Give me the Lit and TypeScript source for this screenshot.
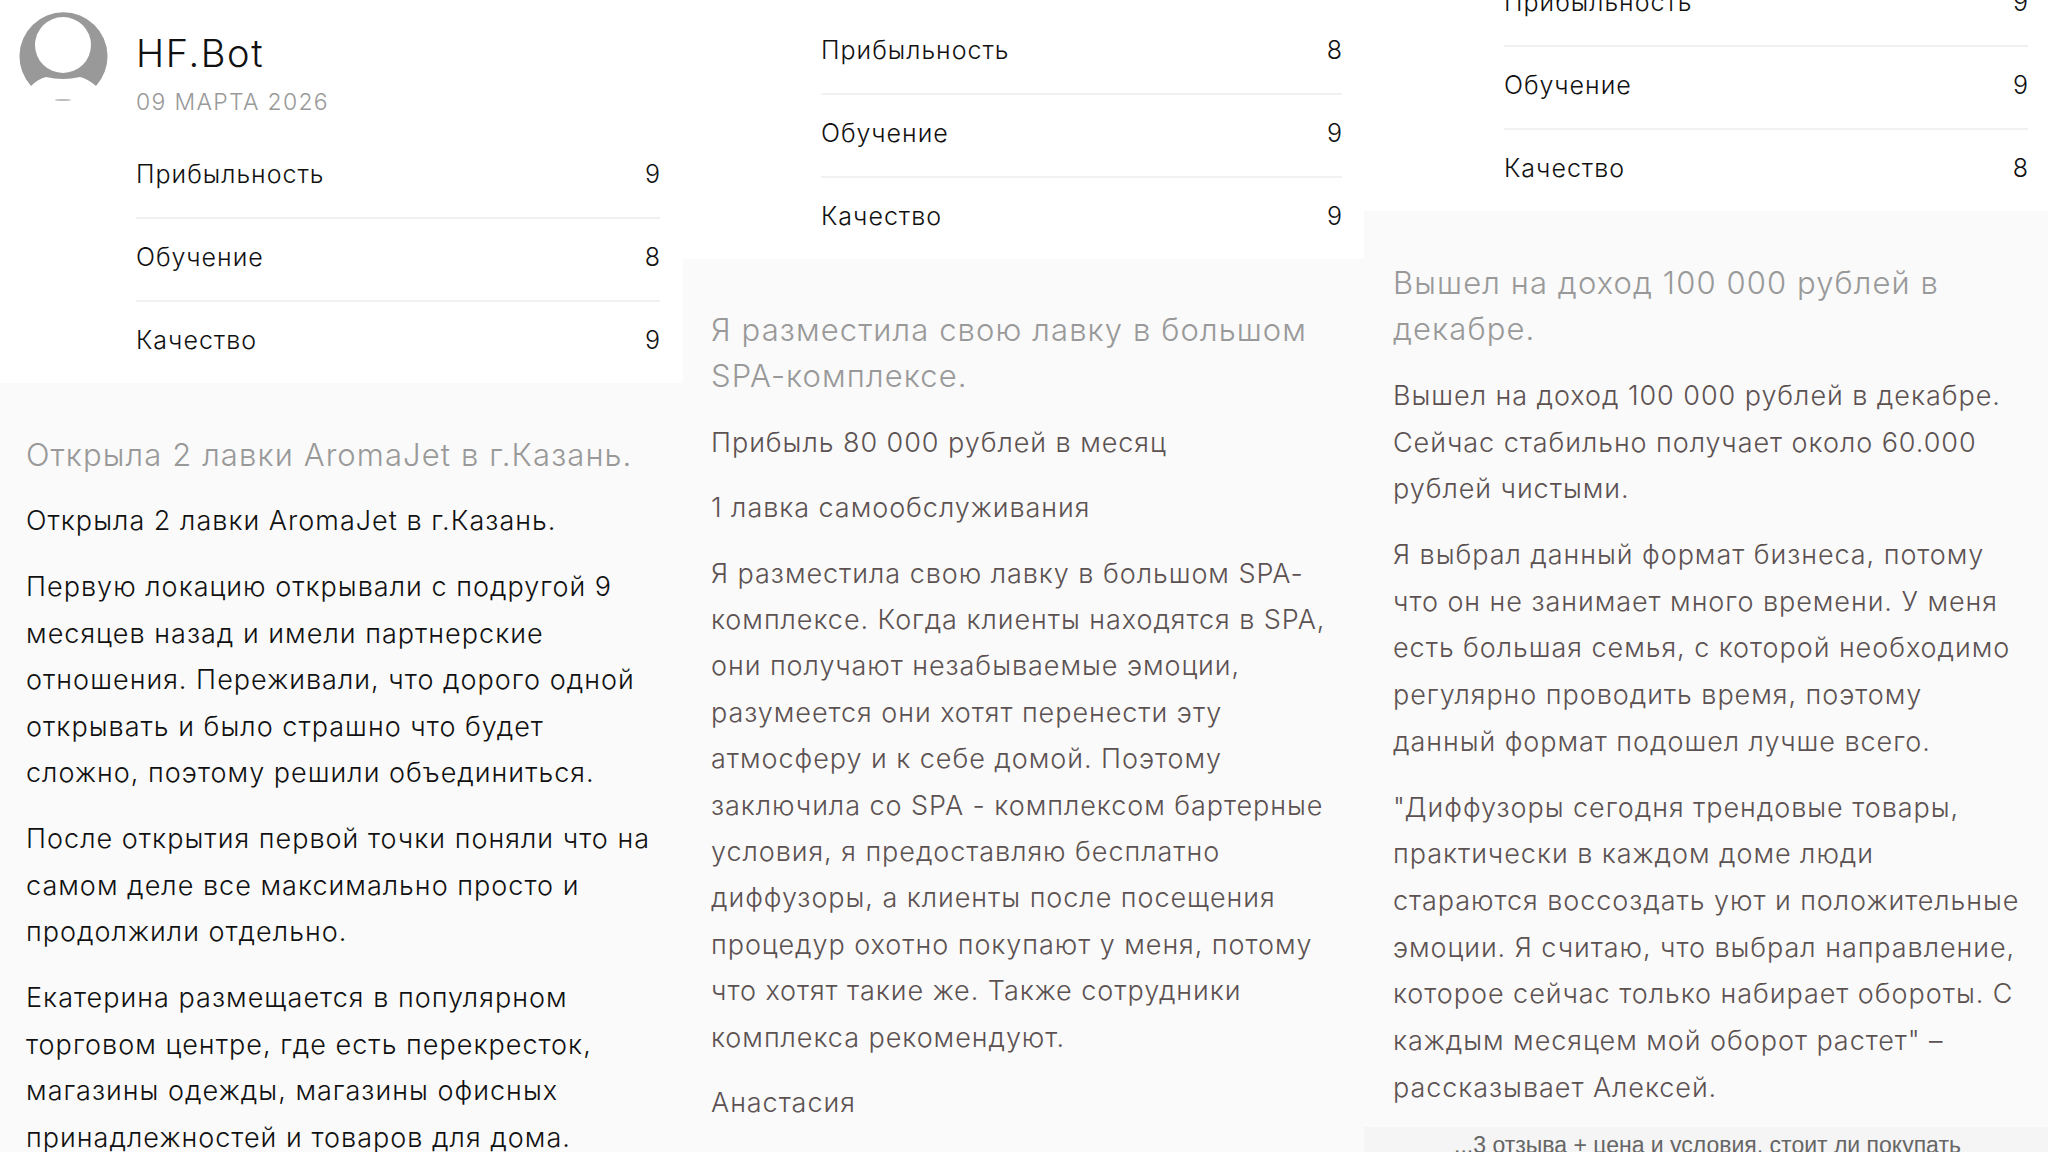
import { LitElement, html, css } from 'lit';
import { customElement } from 'lit/decorators.js';

type Row = [string, string];
interface Col {
  rows: Row[];
  title: string;
  paras: string[];
}

const cols: Col[] = [
  {
    rows: [['Прибыльность', '9'], ['Обучение', '8'], ['Качество', '9']],
    title: 'Открыла 2 лавки AromaJet в г.Казань.',
    paras: [
      'Открыла 2 лавки AromaJet в г.Казань.',
      'Первую локацию открывали с подругой 9 месяцев назад и имели партнерские отношения. Переживали, что дорого одной открывать и было страшно что будет сложно, поэтому решили объединиться.',
      'После открытия первой точки поняли что на самом деле все максимально просто и продолжили отдельно.',
      'Екатерина размещается в популярном торговом центре, где есть перекресток, магазины одежды, магазины офисных принадлежностей и товаров для дома.',
    ],
  },
  {
    rows: [['Прибыльность', '8'], ['Обучение', '9'], ['Качество', '9']],
    title: 'Я разместила свою лавку в большом SPA-комплексе.',
    paras: [
      'Прибыль 80 000 рублей в месяц',
      '1 лавка самообслуживания',
      'Я разместила свою лавку в большом SPA-комплексе. Когда клиенты находятся в SPA, они получают незабываемые эмоции, разумеется они хотят перенести эту атмосферу и к себе домой. Поэтому заключила со SPA - комплексом бартерные условия, я предоставляю бесплатно диффузоры, а клиенты после посещения процедур охотно покупают у меня, потому что хотят такие же. Также сотрудники комплекса рекомендуют.',
      'Анастасия',
    ],
  },
  {
    rows: [['Прибыльность', '9'], ['Обучение', '9'], ['Качество', '8']],
    title: 'Вышел на доход 100 000 рублей в декабре.',
    paras: [
      'Вышел на доход 100 000 рублей в декабре. Сейчас стабильно получает около 60.000 рублей чистыми.',
      'Я выбрал данный формат бизнеса, потому что он не занимает много времени. У меня есть большая семья, с которой необходимо регулярно проводить время, поэтому данный формат подошел лучше всего.',
      '"Диффузоры сегодня трендовые товары, практически в каждом доме люди стараются воссоздать уют и положительные эмоции. Я считаю, что выбрал направление, которое сейчас только набирает обороты. С каждым месяцем мой оборот растет" – рассказывает Алексей.',
    ],
  },
];

@customElement('app-root')
export class AppRoot extends LitElement {
  static styles = css`
    :host {
      display: block;
      height: 1152px;
      overflow: hidden;
      background: #fff;
      font-family: Inter, "Open Sans", sans-serif;
      font-weight: 300;
      color: #111;
    }
    .page {
      display: grid;
      grid-template-columns: 683px 681px 684px;
      height: 1152px;
      overflow: hidden;
    }
    .col {
      height: 1152px;
      overflow: hidden;
      display: flex;
      flex-direction: column;
    }
    .col.two { padding-top: 9px; box-sizing: border-box; }
    .col.three { margin-top: -39px; height: 1191px; }
    .head {
      display: flex;
      height: 133px;
      flex: none;
    }
    .avatar {
      width: 136px;
      flex: none;
    }
    .avatar svg { display: block; }
    .name {
      font-size: 38px;
      line-height: 44px;
      letter-spacing: 1.6px;
      margin-top: 31px;
    }
    .date {
      font-size: 23px;
      line-height: 28px;
      letter-spacing: 1.3px;
      margin-top: 13px;
      color: #999;
    }
    .rows {
      margin: 2.5px 23px -1.5px 136px;
      flex: none;
    }
    .two .rows { margin-left: 138px; margin-right: 22px; }
    .three .rows { margin-left: 140px; margin-right: 20px; }
    .row {
      display: flex;
      justify-content: space-between;
      align-items: center;
      box-sizing: border-box;
      height: 83px;
      padding-bottom: 5px;
      font-size: 25px;
      letter-spacing: 1px;
      border-bottom: 2px solid #f1f1f1;
    }
    .row span:last-child { margin-right: -1px; }
    .row:last-child { border-bottom-color: transparent; }
    .body {
      flex: 1;
      background: #fafafa;
      padding: 48.5px 26px 0 26px;
      font-size: 27px;
      line-height: 46.5px;
      letter-spacing: 1.02px;
      min-height: 0;
    }
    .two .body {
      padding-left: 28px;
      padding-top: 48px;
      line-height: 46.4px;
      letter-spacing: 0.95px;
    }
    .three .body {
      padding-left: 29px;
      padding-right: 24px;
      line-height: 46.7px;
      letter-spacing: 0.95px;
    }
    .title {
      font-size: 31px;
      letter-spacing: 1.1px;
      color: #999;
      margin: 0 0 20px;
    }
    .body p { margin: 0 0 19.5px; }
    .two .body p, .three .body p { margin-bottom: 19px; }
    .one .body p { color: #111; }
    .two .body p, .three .body p { color: #5c5252; }
    .more {
      background: #f5f5f5;
      text-align: center;
      font-family: "Liberation Sans", Arial, sans-serif;
      font-weight: 400;
      font-size: 23px;
      line-height: 26px;
      letter-spacing: 0;
      padding: 5px 0 0 3px;
      color: #666;
      height: 25px;
      box-sizing: border-box;
      overflow: hidden;
      flex: none;
    }
  `;

  renderCol(c: Col, i: number) {
    const names = ['one', 'two', 'three'];
    return html`
      <section class="col ${names[i]}">
        ${i === 0
          ? html`<div class="head">
              <div class="avatar">
                <svg width="126" height="117" viewBox="0 0 126 117">
                  <path d="M31 86A44 44 0 1 1 96 86Q88 79 80 77Q63 81 46 77Q38 79 31 86Z" fill="#999" />
                  <circle cx="63" cy="45" r="28" fill="#fff" />
                  <ellipse cx="63" cy="100" rx="8" ry="1" fill="#bbb" />
                </svg>
              </div>
              <div>
                <div class="name">HF.Bot</div>
                <div class="date">09 МАРТА 2026</div>
              </div>
            </div>`
          : ''}
        <div class="rows">
          ${c.rows.map((r) => html`<div class="row"><span>${r[0]}</span><span>${r[1]}</span></div>`)}
        </div>
        <div class="body">
          <div class="title">${c.title}</div>
          ${c.paras.map((p) => html`<p>${p}</p>`)}
        </div>
        ${i === 2 ? html`<div class="more">...3 отзыва + цена и условия, стоит ли покупать</div>` : ''}
      </section>
    `;
  }

  render() {
    return html`<div class="page">${cols.map((c, i) => this.renderCol(c, i))}</div>`;
  }
}
